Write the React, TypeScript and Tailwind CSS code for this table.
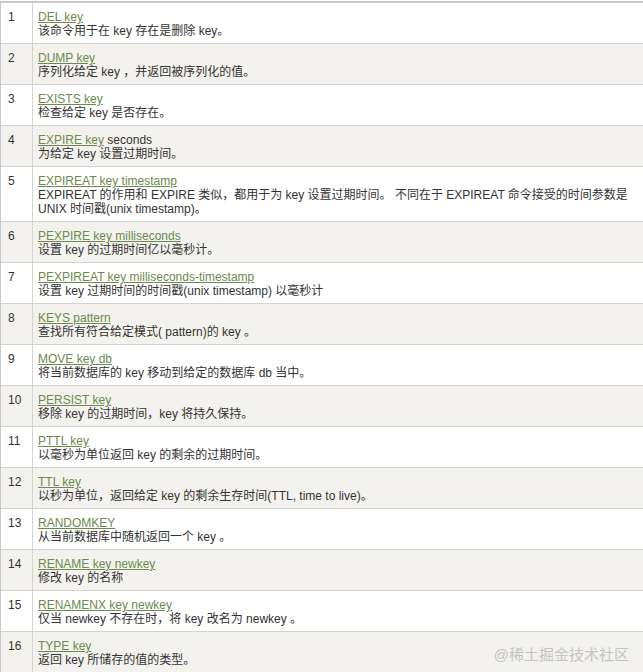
type Cmd = {
  cmd: string;
  plain?: string;
  desc: string[];
};

const commands: Cmd[] = [
  { cmd: "DEL key", desc: ["该命令用于在 key 存在是删除 key。"] },
  { cmd: "DUMP key", desc: ["序列化给定 key ，并返回被序列化的值。"] },
  { cmd: "EXISTS key", desc: ["检查给定 key 是否存在。"] },
  { cmd: "EXPIRE key", plain: " seconds", desc: ["为给定 key 设置过期时间。"] },
  {
    cmd: "EXPIREAT key timestamp",
    desc: [
      "EXPIREAT 的作用和 EXPIRE 类似，都用于为 key 设置过期时间。 不同在于 EXPIREAT 命令接受的时间参数是",
      "UNIX 时间戳(unix timestamp)。",
    ],
  },
  { cmd: "PEXPIRE key milliseconds", desc: ["设置 key 的过期时间亿以毫秒计。"] },
  {
    cmd: "PEXPIREAT key milliseconds-timestamp",
    desc: ["设置 key 过期时间的时间戳(unix timestamp) 以毫秒计"],
  },
  { cmd: "KEYS pattern", desc: ["查找所有符合给定模式( pattern)的 key 。"] },
  { cmd: "MOVE key db", desc: ["将当前数据库的 key 移动到给定的数据库 db 当中。"] },
  { cmd: "PERSIST key", desc: ["移除 key 的过期时间，key 将持久保持。"] },
  { cmd: "PTTL key", desc: ["以毫秒为单位返回 key 的剩余的过期时间。"] },
  {
    cmd: "TTL key",
    desc: ["以秒为单位，返回给定 key 的剩余生存时间(TTL, time to live)。"],
  },
  { cmd: "RANDOMKEY", desc: ["从当前数据库中随机返回一个 key 。"] },
  { cmd: "RENAME key newkey", desc: ["修改 key 的名称"] },
  {
    cmd: "RENAMENX key newkey",
    desc: ["仅当 newkey 不存在时，将 key 改名为 newkey 。"],
  },
  { cmd: "TYPE key", desc: ["返回 key 所储存的值的类型。"] },
];

const font = {
  fontFamily: '"Liberation Sans", Arial, "Noto Sans CJK SC", sans-serif',
};

export default function App() {
  return (
    <div
      className="relative h-[672px] w-[643px] overflow-hidden bg-white pt-[1px] text-[12px] leading-[14px] text-[#333]"
      style={font}
    >
      <div className="border-t-2 border-l border-[#c8c8c8]">
        {commands.map((c, i) => (
          <div
            key={c.cmd}
            className={`flex border-b border-[#d3d3d0] ${i % 2 === 1 ? "bg-[#f3f2ee]" : "bg-white"}`}
          >
            <div className="w-[32px] shrink-0 border-r border-[#d3d3d0] pl-[7px] pt-[7px]">
              {i + 1}
            </div>
            <div className="flex-1 pl-[5px] pt-[7px] pb-[5px]">
              <div>
                <span className="text-[#6b8a4d] underline underline-offset-[1px]">
                  {c.cmd}
                </span>
                {c.plain && <span>{c.plain}</span>}
              </div>
              {c.desc.map((d) => (
                <div key={d} className="whitespace-nowrap">
                  {d}
                </div>
              ))}
            </div>
          </div>
        ))}
      </div>
      <div className="flex h-[3px] w-full">
        <div className="w-[115px] bg-[#5b6b7c]" />
        <div className="w-[117px] bg-[#8894a0]" />
        <div className="w-[115px] bg-[#5b6b7c]" />
        <div className="w-[115px] bg-[#8894a0]" />
        <div className="flex-1 bg-[#5b6b7c]" />
      </div>
      <div className="absolute right-[14px] top-[646px] text-[15px] leading-[18px] text-[#c4c4c4]">
        @稀土掘金技术社区
      </div>
    </div>
  );
}
